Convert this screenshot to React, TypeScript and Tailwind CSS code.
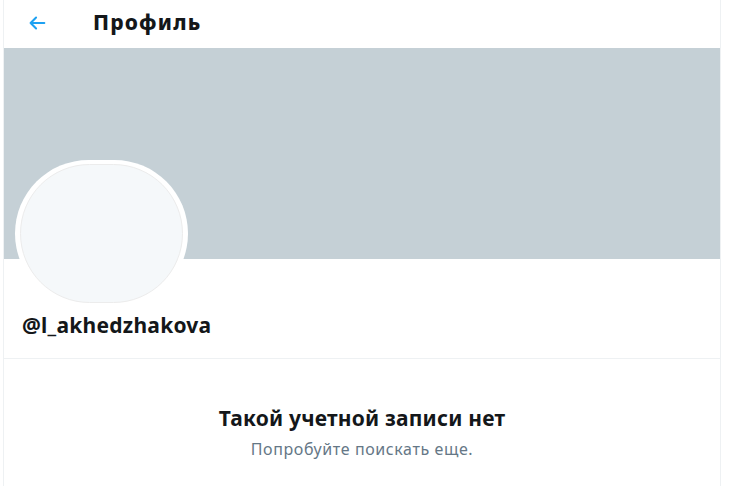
export default function App() {
  return (
    <div className="h-[486px] w-[730px] overflow-hidden bg-white font-['Noto_Sans',sans-serif] text-[#14171a]">
      <div className="ml-[3px] flex h-full w-[718px] flex-col border-x border-[#eef1f3]">
        {/* header */}
        <div className="flex h-[48px] shrink-0 items-center">
          <svg viewBox="0 0 24 24" className="ml-[22px] mt-[-2px] h-[22px] w-[22px] text-[#1da1f2]" fill="none" stroke="currentColor" strokeWidth="2.2" strokeLinecap="round" strokeLinejoin="round">
            <path d="M20 12H5M11 6l-6 6 6 6" />
          </svg>
          <h1 className="ml-[45px] mt-[-4px] text-[21px] font-extrabold leading-none tracking-[1.2px]">Профиль</h1>
        </div>

        {/* banner */}
        <div className="h-[211px] shrink-0 bg-[#c5d0d6]" />

        {/* avatar + handle */}
        <div className="relative h-[100px] shrink-0 border-b border-[#eef1f3]">
          <div className="absolute left-[11px] top-[-99px] h-[147px] w-[173px] rounded-full bg-white p-[4px_5px]">
            <div className="h-full w-full rounded-full border border-[#ececec] bg-[#f5f8fa]" />
          </div>
          <div className="absolute left-[18px] top-[56px] text-[21px] font-bold leading-none tracking-[0.25px]">@l_akhedzhakova</div>
        </div>

        {/* empty state */}
        <div className="flex flex-col items-center pt-[46px]">
          <div className="text-[21px] font-bold leading-[26px] tracking-[0.2px]">Такой учетной записи нет</div>
          <div className="mt-[8px] text-[16px] leading-[20px] tracking-[0.6px] text-[#657786]">Попробуйте поискать еще.</div>
        </div>
      </div>
    </div>
  );
}
